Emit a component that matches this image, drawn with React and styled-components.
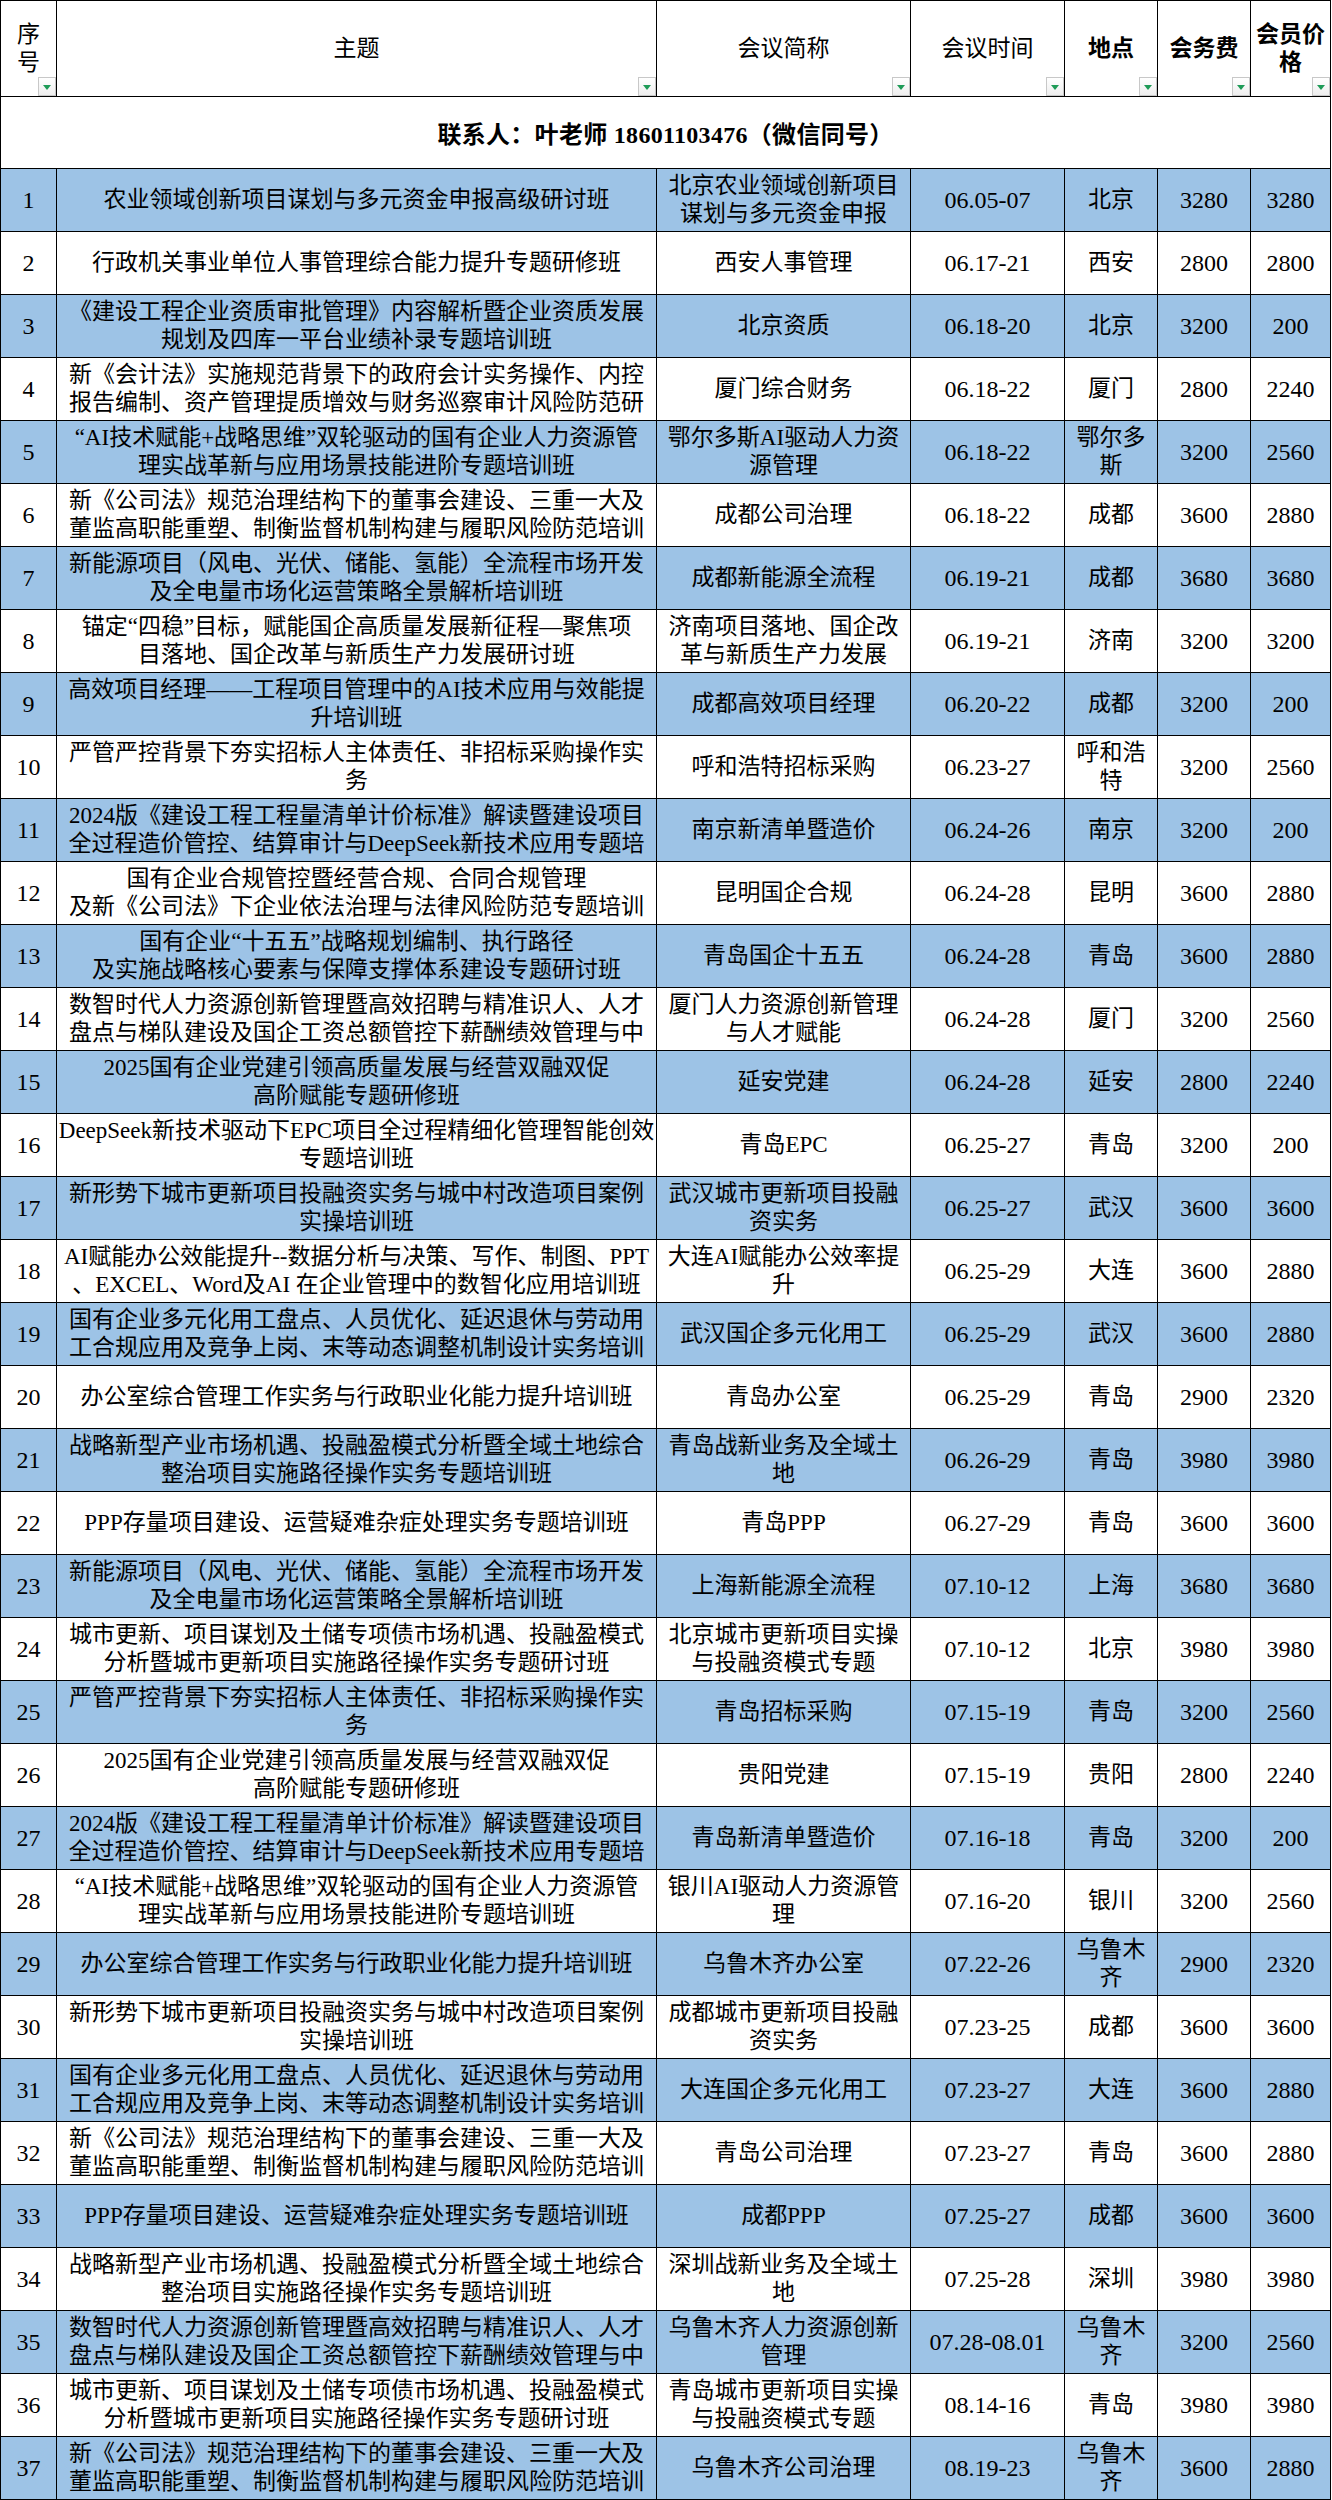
import React from "react"
import styled, { createGlobalStyle } from "styled-components"

// column widths taken from the sheet: seq, topic, short name, date, city, fee, member price
const COLS = "56px 600px 254px 154px 93px 93px 80px"

const GlobalStyle = createGlobalStyle`
    html, body {
        margin: 0;
        padding: 0;
        background: #fff;
    }
    body {
        font-family: "Liberation Serif", "Noto Sans CJK SC", serif;
        color: #000;
    }
`

const Sheet = styled.div`
    width: 1331px;
    border-left: 1px solid #000;
    border-top: 1px solid #000;
    box-sizing: border-box;
`

const Row = styled.div`
    display: grid;
    grid-template-columns: ${COLS};
    height: ${p => p.$height || 63}px;
    box-sizing: border-box;
    border-bottom: 1px solid #000;
    background: ${p => (p.$blue ? "#9dc3e6" : "#fff")};
`

const Cell = styled.div`
    position: relative;
    display: flex;
    flex-direction: column;
    align-items: center;
    justify-content: center;
    box-sizing: border-box;
    border-right: 1px solid #000;
    overflow: hidden;
    padding: 0 2px;
    font-size: ${p => (p.$num ? 24 : 23)}px;
    font-weight: ${p => (p.$bold ? 700 : 400)};
    line-height: 28px;
    text-align: center;
    white-space: nowrap;
`

const Line = styled.span`
    display: block;
`

const ContactRow = styled.div`
    display: flex;
    align-items: center;
    justify-content: center;
    height: 72px;
    box-sizing: border-box;
    border-bottom: 1px solid #000;
    border-right: 1px solid #000;
    font-size: 24px;
    font-weight: 700;
    letter-spacing: 0.3px;
`

// excel autofilter button in the header cells
const Filter = styled.span`
    position: absolute;
    right: 0;
    bottom: 0;
    width: 18px;
    height: 19px;
    box-sizing: border-box;
    border: 1px solid #c8c8c8;
    background: linear-gradient(#ffffff, #eeeeee);

    &::after {
        content: "";
        position: absolute;
        left: 4px;
        top: 7px;
        border-left: 4px solid transparent;
        border-right: 4px solid transparent;
        border-top: 5px solid #1e9b57;
    }
`

const headers = [
    { text: "序|号" },
    { text: "主题" },
    { text: "会议简称" },
    { text: "会议时间" },
    { text: "地点", bold: true },
    { text: "会务费", bold: true },
    { text: "会员价|格", bold: true },
]

// topics that repeat, "|" marks a line break as shown in the sheet
const T = {
    ai: "“AI技术赋能+战略思维”双轮驱动的国有企业人力资源管|理实战革新与应用场景技能进阶专题培训班",
    company: "新《公司法》规范治理结构下的董事会建设、三重一大及|董监高职能重塑、制衡监督机制构建与履职风险防范培训",
    energy: "新能源项目（风电、光伏、储能、氢能）全流程市场开发|及全电量市场化运营策略全景解析培训班",
    bid: "严管严控背景下夯实招标人主体责任、非招标采购操作实|务",
    price: "2024版《建设工程工程量清单计价标准》解读暨建设项目|全过程造价管控、结算审计与DeepSeek新技术应用专题培",
    hr: "数智时代人力资源创新管理暨高效招聘与精准识人、人才|盘点与梯队建设及国企工资总额管控下薪酬绩效管理与中",
    party: "2025国有企业党建引领高质量发展与经营双融双促|高阶赋能专题研修班",
    urban: "新形势下城市更新项目投融资实务与城中村改造项目案例|实操培训班",
    labor: "国有企业多元化用工盘点、人员优化、延迟退休与劳动用|工合规应用及竞争上岗、末等动态调整机制设计实务培训",
    office: "办公室综合管理工作实务与行政职业化能力提升培训班",
    land: "战略新型产业市场机遇、投融盈模式分析暨全域土地综合|整治项目实施路径操作实务专题培训班",
    ppp: "PPP存量项目建设、运营疑难杂症处理实务专题培训班",
    renew: "城市更新、项目谋划及土储专项债市场机遇、投融盈模式|分析暨城市更新项目实施路径操作实务专题研讨班",
}

const rows = [
    ["农业领域创新项目谋划与多元资金申报高级研讨班", "北京农业领域创新项目|谋划与多元资金申报", "06.05-07", "北京", "3280", "3280"],
    ["行政机关事业单位人事管理综合能力提升专题研修班", "西安人事管理", "06.17-21", "西安", "2800", "2800"],
    ["《建设工程企业资质审批管理》内容解析暨企业资质发展|规划及四库一平台业绩补录专题培训班", "北京资质", "06.18-20", "北京", "3200", "200"],
    ["新《会计法》实施规范背景下的政府会计实务操作、内控|报告编制、资产管理提质增效与财务巡察审计风险防范研", "厦门综合财务", "06.18-22", "厦门", "2800", "2240"],
    [T.ai, "鄂尔多斯AI驱动人力资|源管理", "06.18-22", "鄂尔多|斯", "3200", "2560"],
    [T.company, "成都公司治理", "06.18-22", "成都", "3600", "2880"],
    [T.energy, "成都新能源全流程", "06.19-21", "成都", "3680", "3680"],
    ["锚定“四稳”目标，赋能国企高质量发展新征程—聚焦项|目落地、国企改革与新质生产力发展研讨班", "济南项目落地、国企改|革与新质生产力发展", "06.19-21", "济南", "3200", "3200"],
    ["高效项目经理——工程项目管理中的AI技术应用与效能提|升培训班", "成都高效项目经理", "06.20-22", "成都", "3200", "200"],
    [T.bid, "呼和浩特招标采购", "06.23-27", "呼和浩|特", "3200", "2560"],
    [T.price, "南京新清单暨造价", "06.24-26", "南京", "3200", "200"],
    ["国有企业合规管控暨经营合规、合同合规管理|及新《公司法》下企业依法治理与法律风险防范专题培训", "昆明国企合规", "06.24-28", "昆明", "3600", "2880"],
    ["国有企业“十五五”战略规划编制、执行路径|及实施战略核心要素与保障支撑体系建设专题研讨班", "青岛国企十五五", "06.24-28", "青岛", "3600", "2880"],
    [T.hr, "厦门人力资源创新管理|与人才赋能", "06.24-28", "厦门", "3200", "2560"],
    [T.party, "延安党建", "06.24-28", "延安", "2800", "2240"],
    ["DeepSeek新技术驱动下EPC项目全过程精细化管理智能创效|专题培训班", "青岛EPC", "06.25-27", "青岛", "3200", "200"],
    [T.urban, "武汉城市更新项目投融|资实务", "06.25-27", "武汉", "3600", "3600"],
    ["AI赋能办公效能提升--数据分析与决策、写作、制图、PPT|、EXCEL、Word及AI 在企业管理中的数智化应用培训班", "大连AI赋能办公效率提|升", "06.25-29", "大连", "3600", "2880"],
    [T.labor, "武汉国企多元化用工", "06.25-29", "武汉", "3600", "2880"],
    [T.office, "青岛办公室", "06.25-29", "青岛", "2900", "2320"],
    [T.land, "青岛战新业务及全域土|地", "06.26-29", "青岛", "3980", "3980"],
    [T.ppp, "青岛PPP", "06.27-29", "青岛", "3600", "3600"],
    [T.energy, "上海新能源全流程", "07.10-12", "上海", "3680", "3680"],
    [T.renew, "北京城市更新项目实操|与投融资模式专题", "07.10-12", "北京", "3980", "3980"],
    [T.bid, "青岛招标采购", "07.15-19", "青岛", "3200", "2560"],
    [T.party, "贵阳党建", "07.15-19", "贵阳", "2800", "2240"],
    [T.price, "青岛新清单暨造价", "07.16-18", "青岛", "3200", "200"],
    [T.ai, "银川AI驱动人力资源管|理", "07.16-20", "银川", "3200", "2560"],
    [T.office, "乌鲁木齐办公室", "07.22-26", "乌鲁木|齐", "2900", "2320"],
    [T.urban, "成都城市更新项目投融|资实务", "07.23-25", "成都", "3600", "3600"],
    [T.labor, "大连国企多元化用工", "07.23-27", "大连", "3600", "2880"],
    [T.company, "青岛公司治理", "07.23-27", "青岛", "3600", "2880"],
    [T.ppp, "成都PPP", "07.25-27", "成都", "3600", "3600"],
    [T.land, "深圳战新业务及全域土|地", "07.25-28", "深圳", "3980", "3980"],
    [T.hr, "乌鲁木齐人力资源创新|管理", "07.28-08.01", "乌鲁木|齐", "3200", "2560"],
    [T.renew, "青岛城市更新项目实操|与投融资模式专题", "08.14-16", "青岛", "3980", "3980"],
    [T.company, "乌鲁木齐公司治理", "08.19-23", "乌鲁木|齐", "3600", "2880"],
]

const Lines = ({ text }) =>
    text.split("|").map((t, i) => <Line key={i}>{t}</Line>)

const App = () => (
    <>
        <GlobalStyle />
        <Sheet>
            <Row $height={96}>
                {headers.map(h => (
                    <Cell key={h.text} $bold={h.bold}>
                        <Lines text={h.text} />
                        <Filter />
                    </Cell>
                ))}
            </Row>
            <ContactRow>联系人：叶老师 18601103476（微信同号）</ContactRow>
            {rows.map((r, i) => (
                <Row key={i} $blue={i % 2 === 0}>
                    <Cell $num>{i + 1}</Cell>
                    <Cell><Lines text={r[0]} /></Cell>
                    <Cell><Lines text={r[1]} /></Cell>
                    <Cell $num>{r[2]}</Cell>
                    <Cell><Lines text={r[3]} /></Cell>
                    <Cell $num>{r[4]}</Cell>
                    <Cell $num>{r[5]}</Cell>
                </Row>
            ))}
        </Sheet>
    </>
)

export default App
